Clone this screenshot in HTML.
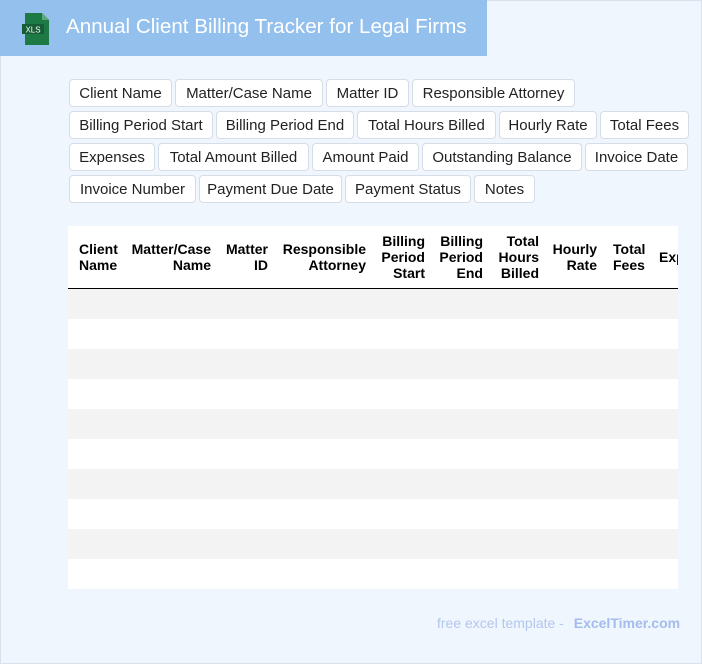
<!DOCTYPE html>
<html><head><meta charset="utf-8"><style>
*{margin:0;padding:0;box-sizing:border-box}
body{width:702px;height:664px;background:#f0f6fe;position:relative;overflow:hidden;font-family:"Liberation Sans",Arial,sans-serif}
.bd{position:absolute;left:0;top:0;width:702px;height:664px;border:1px solid #d8e2ee}
.hdr{position:absolute;left:0;top:0;width:487px;height:56px;background:#93c0ec}
.hdr h1{position:absolute;left:66px;top:15px;font-size:20.6px;font-weight:normal;color:#fff;white-space:nowrap}
.tag{position:absolute;height:28px;background:#fff;border:1px solid #d6dde6;border-radius:4px;font-size:15px;color:#222;line-height:27px;text-align:center;white-space:nowrap}
.tbl{position:absolute;left:68px;top:226px;width:610px;height:363px;background:#fff;overflow:hidden}
.th{position:absolute;font-size:14px;font-weight:bold;line-height:16px;color:#000;white-space:nowrap}
.r{text-align:right}
.line{position:absolute;left:0;top:62px;width:610px;height:1.5px;background:#000}
.row{position:absolute;left:0;width:610px;height:30px;background:#f3f3f3}
.foot{position:absolute;top:615px;left:437px;font-size:14px;color:#b3c6ee;white-space:nowrap}
.foot b{color:#a3bcec;margin-left:6px}
</style></head><body>
<div class="bd"></div>
<div class="hdr">
<svg style="position:absolute;left:22px;top:13px" width="28" height="32" viewBox="0 0 28 32"><path d="M3 0h17l7 7v25H3z" fill="#1d7a45"/><path d="M20 0v7h7z" fill="#5aa77a"/><rect x="0" y="11" width="22" height="10" fill="#155d35"/><text x="11" y="19.5" font-size="8" fill="#fff" text-anchor="middle" font-family="Liberation Sans">XLS</text></svg>
<h1>Annual Client Billing Tracker for Legal Firms</h1></div>

<div class="tag" style="left:69px;top:79px;width:103px">Client Name</div>
<div class="tag" style="left:175px;top:79px;width:148px">Matter/Case Name</div>
<div class="tag" style="left:326px;top:79px;width:83px">Matter ID</div>
<div class="tag" style="left:412px;top:79px;width:163px">Responsible Attorney</div>
<div class="tag" style="left:69px;top:111px;width:144px">Billing Period Start</div>
<div class="tag" style="left:216px;top:111px;width:138px">Billing Period End</div>
<div class="tag" style="left:357px;top:111px;width:139px">Total Hours Billed</div>
<div class="tag" style="left:499px;top:111px;width:98px">Hourly Rate</div>
<div class="tag" style="left:600px;top:111px;width:89px">Total Fees</div>
<div class="tag" style="left:69px;top:143px;width:86px">Expenses</div>
<div class="tag" style="left:158px;top:143px;width:151px">Total Amount Billed</div>
<div class="tag" style="left:312px;top:143px;width:107px">Amount Paid</div>
<div class="tag" style="left:422px;top:143px;width:160px">Outstanding Balance</div>
<div class="tag" style="left:585px;top:143px;width:103px">Invoice Date</div>
<div class="tag" style="left:69px;top:175px;width:127px">Invoice Number</div>
<div class="tag" style="left:199px;top:175px;width:143px">Payment Due Date</div>
<div class="tag" style="left:345px;top:175px;width:126px">Payment Status</div>
<div class="tag" style="left:474px;top:175px;width:61px">Notes</div>

<div class="tbl">
<div class="th" style="left:11px;top:15px">Client<br>Name</div>
<div class="th r" style="right:467px;top:15px">Matter/Case<br>Name</div>
<div class="th r" style="right:410px;top:15px">Matter<br>ID</div>
<div class="th r" style="right:312px;top:15px">Responsible<br>Attorney</div>
<div class="th r" style="right:253px;top:7px">Billing<br>Period<br>Start</div>
<div class="th r" style="right:195px;top:7px">Billing<br>Period<br>End</div>
<div class="th r" style="right:139px;top:7px">Total<br>Hours<br>Billed</div>
<div class="th r" style="right:81px;top:15px">Hourly<br>Rate</div>
<div class="th" style="left:545px;top:15px">Total<br>Fees</div>
<div class="th" style="left:591px;top:23px">Expenses</div>
<div class="line"></div>
<div class="row" style="top:63px"></div>
<div class="row" style="top:123px"></div>
<div class="row" style="top:183px"></div>
<div class="row" style="top:243px"></div>
<div class="row" style="top:303px"></div>
</div>

<div class="foot">free excel template - <b>ExcelTimer.com</b></div>
</body></html>
